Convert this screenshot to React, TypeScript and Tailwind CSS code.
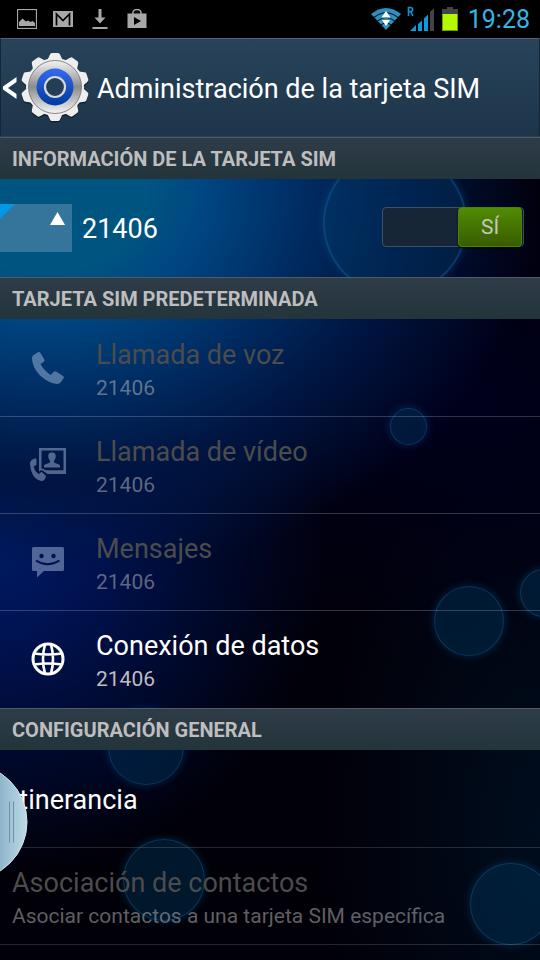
import { useState } from 'react';
import type { ReactNode } from 'react';

const bubbles = [
  'left-[323px] top-[151px] size-36 border-2',
  'left-[390px] top-[408px] size-[37px] border',
  'left-[434px] top-[586px] size-[70px] border',
  'left-[520px] top-[569px] size-12 border',
  'left-[108px] top-[709px] size-[76px] border',
  'left-[123px] top-[839px] size-[82px] border',
  'left-[470px] top-[863px] size-[82px] border',
];

function Wallpaper() {
  return (
    <div className="absolute inset-0 overflow-hidden bg-[#010008]" aria-hidden="true">
      <div className="absolute inset-0 bg-[radial-gradient(ellipse_220px_400px_at_100%_86%,#000d1e,transparent)]" />
      <div className="absolute inset-0 bg-[radial-gradient(ellipse_360px_260px_at_85%_42%,#00001c,transparent)]" />
      <div className="absolute inset-0 bg-[radial-gradient(ellipse_330px_330px_at_0%_57%,#001a66_0%,#00114e_30%,#000a30_60%,transparent_100%)]" />
      <div className="absolute inset-0 bg-[radial-gradient(ellipse_500px_390px_at_8%_20%,#005580_0%,#005580_20%,#004682_32%,#002c62_52%,#001542_72%,transparent_100%)]" />
      {bubbles.map((bubble) => (
        <div
          key={bubble}
          className={`absolute rounded-full border-[#1464a0]/40 bg-[#004270]/35 shadow-[0_0_10px_#0a5a9666] ${bubble}`}
        />
      ))}
    </div>
  );
}

function StatusBar() {
  return (
    <div className="flex h-[38px] items-center justify-between bg-black pl-[17px] pr-2.5">
      <div className="flex items-center gap-4 text-[#a8a8a8]">
        <svg width="20" height="20" viewBox="0 0 20 20" fill="none" stroke="currentColor">
          <rect x="0.5" y="0.5" width="19" height="19" strokeWidth="1.2" />
          <path d="M2 17v-4l3.500-3.500 3.500 3 2-1 2.500 1.500 2-1 2.500 2V17z" fill="currentColor" stroke="none" />
        </svg>
        <svg width="20" height="16" viewBox="0 0 20 16">
          <rect width="20" height="16" fill="currentColor" />
          <path d="M3.500 14.500V3L10 9.500 16.500 3v11.500" fill="none" stroke="#000" strokeWidth="1.700" />
        </svg>
        <svg width="16" height="20" viewBox="0 0 16 20" className="mx-[3px]" fill="currentColor">
          <path d="M6.500 0h3v8.500H13.500L8 14.500 2.500 8.500h4zM0.500 18h15v2H0.500z" />
        </svg>
        <svg width="20" height="20" viewBox="0 0 20 20" fill="currentColor">
          <path d="M6 5V3.500a4 3 0 0 1 8 0V5" fill="none" stroke="currentColor" strokeWidth="1.500" />
          <path d="M0.500 4.500h19V19h-19z" />
          <path d="M7 8v8l7-4z" fill="#000" />
        </svg>
      </div>
      <div className="flex items-center">
        <svg width="30" height="24" viewBox="0 0 30 24">
          <path d="M15 23 0 7Q15-5 30 7z" fill="#2f8fbd" />
          <path d="M3 10.500Q15 1 27 10.500M6.500 14Q15 7 23.500 14M10 18Q15 14 20 18" fill="none" stroke="#001722" strokeWidth="1.200" />
          <path d="M15 4l4.500 6.500h-9zM15 19l-4-6h8z" fill="#fff" />
        </svg>
        <svg width="27" height="26" viewBox="0 0 27 26" className="ml-1.5 mr-2">
          <path d="M1.500 10V1.500h2a1.800 1.800 0 0 1 0 4.200h-2M3.700 5.700 6 10" fill="none" stroke="#0a93da" strokeWidth="1.600" />
          <path d="M3 25h6v-6zM11 25h4V14.500l-4 3.500zM17 25h4V8.500l-4 4z" fill="#0a9be5" />
          <path d="M23 25h4V2l-4 4z" fill="#444" />
        </svg>
        <svg width="16" height="24" viewBox="0 0 16 24" className="mr-2.5">
          <path d="M5 0h6v2h5v7H0V2h5z" fill="#444" />
          <path d="M0 7h16v17H0z" fill="#6f9d00" />
          <path d="M1 7h14v16H1z" fill="#b2f800" />
        </svg>
        <span className="pt-0.5 text-[25px] leading-8 text-[#33b5e5]">19:28</span>
      </div>
    </div>
  );
}

const teeth = [0, 36, 72, 108, 144, 180, 216, 252, 288, 324];

function GearIcon() {
  return (
    <svg width="70" height="72" viewBox="0 0 70 72">
      <defs>
        <linearGradient id="rim" x1="0" y1="0" x2="0" y2="1">
          <stop offset="0" stopColor="#f4f4f4" />
          <stop offset="0.5" stopColor="#8c8c8c" />
          <stop offset="1" stopColor="#f4f4f4" />
        </linearGradient>
        <linearGradient id="hub" x1="0" y1="0" x2="0" y2="1">
          <stop offset="0" stopColor="#356af0" />
          <stop offset="1" stopColor="#003a9c" />
        </linearGradient>
      </defs>
      <g fill="#06121c" opacity="0.6" transform="translate(0 1.5)">
        <circle cx="35" cy="35" r="29" />
        {teeth.map((angle) => (
          <path key={angle} d="M27 9 30 2.500Q30.500 1 32 1h6q1.500 0 2 1.500L43 9z" transform={`rotate(${angle} 35 35)`} />
        ))}
      </g>
      <g fill="#eeeeee">
        <circle cx="35" cy="35" r="29" />
        {teeth.map((angle) => (
          <path key={angle} d="M27 9 30 2.500Q30.500 1 32 1h6q1.500 0 2 1.500L43 9z" transform={`rotate(${angle} 35 35)`} />
        ))}
      </g>
      <circle cx="35" cy="35" r="26.500" fill="url(#rim)" stroke="#6e6e6e" strokeWidth="0.800" />
      <circle cx="35" cy="35" r="18.500" fill="url(#hub)" />
      <circle cx="35" cy="35" r="10" fill="#243f55" stroke="#d8d8d8" strokeWidth="2.200" />
    </svg>
  );
}

function PhoneIcon() {
  return (
    <svg width="32" height="32" viewBox="0 0 32 32" fill="currentColor">
      <path d="M0 6Q0 4 1.500 3L6 0.300Q7.500-.4 8.500 1L12.300 7.500Q13 9 11.500 10L8.500 12Q12 18.500 18.700 23L21.500 20Q22.500 18.600 24 19.500L31 24Q32.500 25 31.500 26.300L29 30Q27.500 32 25 32Q17 31.500 8 23.500Q0 15 0 6z" />
    </svg>
  );
}

function VideoCallIcon() {
  return (
    <svg width="36" height="34" viewBox="0 0 36 34" fill="currentColor">
      <path
        fillRule="evenodd"
        d="M9 0h27v26H17.500L14 23.500 11.500 22 9 23.500zM11.500 2.500v18l5 1.800h17V2.500z"
      />
      <path d="M22 4.500c3 0 4 2 3.700 4.500-.2 2-1.200 3-1.700 4v1.500l6 2.500v2.500H14V17l6-2.500V13c-.5-1-1.500-2-1.700-4C18 6.500 19 4.500 22 4.500z" />
      <path d="M0 15.500Q0 12 4.500 10.500L6.500 11v6l-2.700 1.200Q4.300 23.500 9 26l2.500-2.200L16 28q-1 5-4.500 5Q1 31 0 15.500z" />
    </svg>
  );
}

function MessageIcon() {
  return (
    <svg width="32" height="31" viewBox="0 0 32 31">
      <path d="M1.500 0h29Q32 0 32 1.500v21q0 1.500-1.500 1.500H12l-7 6.500V24H1.500Q0 24 0 22.500v-21Q0 0 1.500 0z" fill="currentColor" />
      <g fill="#001050">
        <circle cx="9.500" cy="9" r="2.200" />
        <circle cx="21.500" cy="9" r="2.200" />
      </g>
      <path d="M4 13.500Q15.500 21 27.500 13.500" fill="none" stroke="#001050" strokeWidth="2" />
    </svg>
  );
}

function GlobeIcon() {
  return (
    <svg width="34" height="34" viewBox="0 0 34 34" fill="none" stroke="currentColor" strokeWidth="2.600">
      <circle cx="17" cy="17" r="15" strokeWidth="3" />
      <path d="M14 2.500Q10 17 14 31.500M20 2.500Q24 17 20 31.500M3 11.500Q17 13.500 31 11.500M3 22.500Q17 20.500 31 22.500" />
    </svg>
  );
}

function SectionHeader({ children }: { children: ReactNode }) {
  return (
    <h2 className="flex h-[42px] items-center border-t border-[#4e5c66] bg-linear-to-b from-[#2e3c48] to-[#23343a] px-3 text-xl font-bold leading-6 text-[#bebebe]">
      {children}
    </h2>
  );
}

const simOptions = [
  { title: 'Llamada de voz', value: '21406', icon: <PhoneIcon />, enabled: false },
  { title: 'Llamada de vídeo', value: '21406', icon: <VideoCallIcon />, enabled: false },
  { title: 'Mensajes', value: '21406', icon: <MessageIcon />, enabled: false },
  { title: 'Conexión de datos', value: '21406', icon: <GlobeIcon />, enabled: true },
];

export default function App() {
  const [simOn, setSimOn] = useState(true);

  return (
    <div className="relative min-h-screen overflow-hidden bg-black font-['Roboto',sans-serif] text-white">
      <Wallpaper />
      <div className="relative">
        <StatusBar />

        <header className="flex h-[99px] items-center border-x border-t border-b border-x-[#132635] border-t-[#4d6272] border-b-[#27445a] bg-linear-to-b from-[#28435a] to-[#1d354a]">
          <button type="button" aria-label="Atrás" className="flex items-center pl-px">
            <svg width="15" height="24" viewBox="0 0 15 24" fill="#fff">
              <path d="M14.500 1v5L6 12l8.500 6v5L1 13.500v-3z" />
            </svg>
            <span className="ml-[3px]">
              <GearIcon />
            </span>
          </button>
          <h1 className="ml-[7px] pt-0.5 text-[27px] leading-9">Administración de la tarjeta SIM</h1>
        </header>

        <SectionHeader>INFORMACIÓN DE LA TARJETA SIM</SectionHeader>
        <div className="flex h-[98px] items-center justify-between pr-4">
          <div className="flex items-center gap-2.5">
            <svg width="72" height="48" viewBox="0 0 72 48">
              <rect width="72" height="48" fill="#35759c" />
              <path d="M0 0h15L0 15z" fill="#0099e5" />
              <path d="M57.500 8 65 21H50z" fill="#fff" />
            </svg>
            <span id="sim-name" className="pt-0.5 text-[27px] leading-9">21406</span>
          </div>
          <label className="mb-0.5 flex h-10 w-[142px] cursor-pointer justify-end rounded border border-[#3a5168] bg-[#172637] has-focus-visible:outline-2">
            <input
              type="checkbox"
              role="switch"
              aria-labelledby="sim-name"
              className="sr-only"
              checked={simOn}
              onChange={(e) => setSimOn(e.target.checked)}
            />
            <span className="-my-px mr-px flex w-16 items-center justify-center rounded border border-[#4b8500] bg-linear-to-b from-[#528c05] to-[#375c00] pt-0.5 text-[21px] text-[#c4c8bc] shadow-[0_1px_2px_#000]">
              {simOn ? 'SÍ' : 'NO'}
            </span>
          </label>
        </div>

        <SectionHeader>TARJETA SIM PREDETERMINADA</SectionHeader>
        <ul className="divide-y divide-white/20 py-px">
          {simOptions.map((option) => (
            <li key={option.title}>
              <button type="button" disabled={!option.enabled} className="flex h-24 w-full items-center text-left">
                <span className={`flex w-24 justify-center ${option.enabled ? 'text-white' : 'text-[#b4c8e6]/45'}`}>
                  {option.icon}
                </span>
                <span className="flex flex-col pt-1">
                  <span className={`text-[27px] leading-9 ${option.enabled ? 'text-white' : 'text-[#4c4c4c]'}`}>
                    {option.title}
                  </span>
                  <span className={`text-[21px] leading-[30px] ${option.enabled ? 'text-[#bebebe]' : 'text-[#bebebe]/50'}`}>
                    {option.value}
                  </span>
                </span>
              </button>
            </li>
          ))}
        </ul>

        <SectionHeader>CONFIGURACIÓN GENERAL</SectionHeader>
        <ul className="divide-y divide-white/15 border-b border-white/15 pt-px">
          <li className="relative">
            <button type="button" className="flex h-24 w-full items-center px-3 pt-0.5 text-left text-[27px] leading-9">
              Itinerancia
            </button>
            <button type="button" aria-label="Abrir panel lateral" className="absolute left-0 top-5">
              <svg width="28" height="102" viewBox="0 0 28 102">
                <defs>
                  <linearGradient id="handle" x1="0" y1="0" x2="28" y2="0" gradientUnits="userSpaceOnUse">
                    <stop offset="0" stopColor="#8fb5cb" />
                    <stop offset="1" stopColor="#c0dce8" />
                  </linearGradient>
                </defs>
                <circle cx="-31" cy="51" r="58" fill="url(#handle)" stroke="#d3e8f0" />
                <path d="M9.500 30.500v41M13.500 30.500v41" stroke="#6c93aa" />
              </svg>
            </button>
          </li>
          <li>
            <button type="button" disabled className="flex h-24 w-full flex-col justify-center px-3 pt-1 text-left">
              <span className="text-[27px] leading-9 text-[#4c4c4c]">Asociación de contactos</span>
              <span className="text-[21px] leading-[30px] text-[#bebebe]/50">
                Asociar contactos a una tarjeta SIM específica
              </span>
            </button>
          </li>
        </ul>
      </div>
    </div>
  );
}
